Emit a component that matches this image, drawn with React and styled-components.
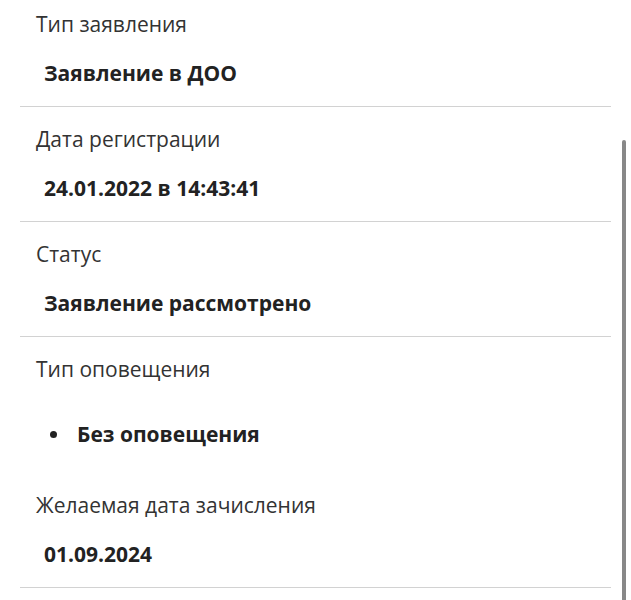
import styled, { createGlobalStyle } from 'styled-components'

const GlobalStyle = createGlobalStyle`
  html, body {
    margin: 0;
    padding: 0;
    background: #fff;
  }
  body {
    font-family: "Open Sans", "Liberation Sans", sans-serif;
    color: #2b2b2b;
    -webkit-font-smoothing: antialiased;
  }
`

const Screen = styled.div`
  position: relative;
  width: 631px;
  height: 600px;
  overflow: hidden;
  background: #fff;
`

const DetailsList = styled.div`
  display: flex;
  flex-direction: column;
  padding: 10px 20px 0;
`

const Field = styled.div`
  display: flex;
  flex-direction: column;
  gap: 21px;
  padding: 18px 0 19px 16px;
  border-bottom: ${p => (p.$divider ? '1px solid #d2d2d2' : 'none')};

  &:first-child {
    padding-top: 0;
  }
`

const Label = styled.div`
  font-size: 21px;
  line-height: 28px;
  font-weight: 400;
  color: #333;
`

const Value = styled.div`
  font-size: 21px;
  line-height: 28px;
  font-weight: 700;
  color: #222;
  padding-left: 8px;
`

const Bullets = styled.ul`
  margin: 16px 0 6px;
  padding: 0 0 0 14px;
  list-style: none;
`

const BulletItem = styled.li`
  display: flex;
  align-items: center;
  gap: 20px;
  font-size: 21px;
  line-height: 28px;
  font-weight: 700;
  color: #222;

  &::before {
    content: '';
    flex: none;
    width: 7px;
    height: 7px;
    border-radius: 50%;
    background: #222;
  }
`

const ScrollThumb = styled.div`
  position: absolute;
  right: 5px;
  top: 140px;
  width: 4px;
  height: 480px;
  border-radius: 2px;
  background: #888;
`

const fields = [
  { label: 'Тип заявления', value: 'Заявление в ДОО' },
  { label: 'Дата регистрации', value: '24.01.2022 в 14:43:41' },
  { label: 'Статус', value: 'Заявление рассмотрено' },
  { label: 'Тип оповещения', list: ['Без оповещения'] },
  { label: 'Желаемая дата зачисления', value: '01.09.2024' },
]

export default function App() {
  return (
    <Screen>
      <GlobalStyle />
      <DetailsList>
        {fields.map((f, i) => (
          <Field key={i} $divider={!f.list}>
            <Label>{f.label}</Label>
            {f.list ? (
              <Bullets>
                {f.list.map(item => <BulletItem key={item}>{item}</BulletItem>)}
              </Bullets>
            ) : (
              <Value>{f.value}</Value>
            )}
          </Field>
        ))}
      </DetailsList>
      <ScrollThumb />
    </Screen>
  )
}
